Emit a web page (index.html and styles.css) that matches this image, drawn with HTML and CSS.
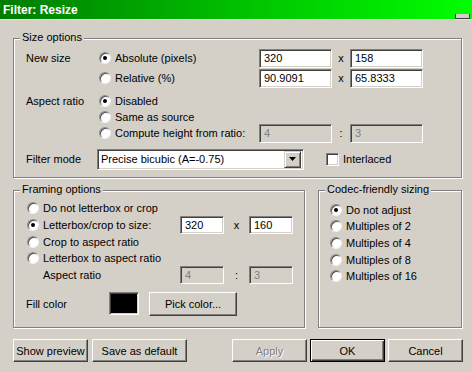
FILE: index.html
```html
<!DOCTYPE html>
<html>
<head>
<meta charset="utf-8">
<link rel="stylesheet" href="styles.css">
</head>
<body>
<div class="window">
  <div class="titlebar">
    <span class="title">Filter: Resize</span>
    <span class="tb-btn"></span>
  </div>
  <div class="content">
    <div class="group group-size">
      <span class="legend">Size options</span>
      <div class="row h20">
        <span class="lbl w73">New size</span>
        <span class="opt w160"><span class="radio on"></span>Absolute (pixels)</span>
        <span class="field w73">320</span><span class="sep w18">x</span><span class="field w73">158</span>
      </div>
      <div class="row h20">
        <span class="lbl w73"></span>
        <span class="opt w160"><span class="radio"></span>Relative (%)</span>
        <span class="field w73">90.9091</span><span class="sep w18">x</span><span class="field w73">65.8333</span>
      </div>
      <div class="row h16 mt5">
        <span class="lbl w73">Aspect ratio</span>
        <span class="opt w160"><span class="radio on"></span>Disabled</span>
      </div>
      <div class="row h16">
        <span class="lbl w73"></span>
        <span class="opt w160"><span class="radio"></span>Same as source</span>
      </div>
      <div class="row h16">
        <span class="lbl w73"></span>
        <span class="opt w160"><span class="radio"></span>Compute height from ratio:</span>
        <span class="field w73 disabled">4</span><span class="sep w18">:</span><span class="field w73 disabled">3</span>
      </div>
      <div class="row h22 mt7">
        <span class="lbl w71">Filter mode</span>
        <div class="combo">
          <span class="combo-text">Precise bicubic (A=-0.75)</span>
          <span class="combo-btn"><svg width="7" height="4" viewBox="0 0 7 4"><path d="M0 0h7L3.5 4z" fill="#000"/></svg></span>
        </div>
        <span class="check"></span>
        <span class="check-label">Interlaced</span>
      </div>
    </div>

    <div class="lower">
      <div class="group group-frame">
        <span class="legend">Framing options</span>
        <div class="row h16">
          <span class="opt"><span class="radio"></span>Do not letterbox or crop</span>
        </div>
        <div class="row h17">
          <span class="opt w153"><span class="radio on"></span>Letterbox/crop to size:</span>
          <span class="field w44 h18">320</span><span class="sep w25">x</span><span class="field w44 h18">160</span>
        </div>
        <div class="row h17">
          <span class="opt"><span class="radio"></span>Crop to aspect ratio</span>
        </div>
        <div class="row h16">
          <span class="opt"><span class="radio"></span>Letterbox to aspect ratio</span>
        </div>
        <div class="row h18">
          <span class="lbl w153 indent">Aspect ratio</span>
          <span class="field w44 h18 disabled">4</span><span class="sep w25">:</span><span class="field w44 h18 disabled">3</span>
        </div>
        <div class="row h23 mt8 fill-row">
          <span class="lbl w83">Fill color</span>
          <span class="swatch"></span>
          <span class="btn pick">Pick color...</span>
        </div>
      </div>

      <div class="group group-codec">
        <span class="legend">Codec-friendly sizing</span>
        <div class="row h16"><span class="opt"><span class="radio on"></span>Do not adjust</span></div>
        <div class="row h16"><span class="opt"><span class="radio"></span>Multiples of 2</span></div>
        <div class="row h17"><span class="opt"><span class="radio"></span>Multiples of 4</span></div>
        <div class="row h17"><span class="opt"><span class="radio"></span>Multiples of 8</span></div>
        <div class="row h16"><span class="opt"><span class="radio"></span>Multiples of 16</span></div>
      </div>
    </div>

    <div class="buttons">
      <span class="btn b75">Show preview</span>
      <span class="btn b95 ml4">Save as default</span>
      <span class="btn b75 apply">Apply</span>
      <span class="btn b75 ml3 default">OK</span>
      <span class="btn b75 ml3">Cancel</span>
    </div>
  </div>
</div>
</body>
</html>
```

FILE: styles.css
```css
* { box-sizing: border-box; }

html, body {
  margin: 0;
  padding: 0;
  background: #d4d0c8;
}

body {
  font-family: "Liberation Sans", Arial, sans-serif;
  font-size: 11px;
  color: #000;
}

.window {
  width: 472px;
  height: 372px;
  background: #d4d0c8;
  overflow: hidden;
}

.titlebar {
  position: relative;
  height: 20px;
  background: linear-gradient(to right, #007c00, #00c000 50%, #00ff00);
  display: flex;
  align-items: center;
  padding-left: 3px;
  border-bottom: 1px solid #e6e3dc;
}

.title {
  color: #fff;
  font-weight: bold;
  font-size: 12px;
  line-height: 14px;
}

.tb-btn {
  position: absolute;
  right: 2px;
  top: 14px;
  width: 15px;
  height: 5px;
  background: #d4d0c8;
  border: 1px solid #404040;
  border-top: none;
}

.content {
  padding: 18px 9px 0 13px;
  display: flex;
  flex-direction: column;
}

.group {
  position: relative;
  border: 1px solid #808080;
  box-shadow: inset 1px 1px 0 #fff, 1px 1px 0 #fff;
  display: flex;
  flex-direction: column;
}

.legend {
  position: absolute;
  top: -8px;
  left: 6px;
  height: 13px;
  line-height: 13px;
  padding: 0 2px;
  background: #d4d0c8;
}

.group-size {
  width: 449px;
  height: 140px;
  padding: 9px 0 0 12px;
}

.lower {
  display: flex;
  gap: 13px;
  margin-top: 12px;
}

.group-frame {
  width: 292px;
  height: 138px;
  padding: 9px 0 0 13px;
}

.group-codec {
  width: 144px;
  height: 138px;
  padding: 11px 0 0 11px;
}

.row {
  display: flex;
  align-items: center;
  white-space: nowrap;
}

.h16 { height: 16px; }
.h17 { height: 17px; }
.h18 { height: 18px; }
.h20 { height: 20px; }
.h22 { height: 22px; }
.h23 { height: 23px; }
.mt5 { margin-top: 5px; }
.mt7 { margin-top: 7px; }
.mt8 { margin-top: 8px; }

.lbl { flex: none; }
.w71 { width: 71px; }
.w73 { width: 73px; }
.w83 { width: 83px; }
.w153 { width: 153px; }
.w160 { width: 160px; }
.w44 { width: 44px; }
.w18 { width: 18px; }
.w25 { width: 25px; }
.indent { padding-left: 16px; }

.opt {
  display: flex;
  align-items: center;
  gap: 4px;
  flex: none;
}

.radio {
  position: relative;
  flex: none;
  width: 12px;
  height: 12px;
  border-radius: 50%;
  background: #fff;
  border: 1px solid;
  border-color: #8a8a8a #f0f0f0 #f0f0f0 #8a8a8a;
  box-shadow: inset 1px 1px 0 #505050;
}

.radio.on::after {
  content: "";
  position: absolute;
  left: 3px;
  top: 3px;
  width: 4px;
  height: 4px;
  border-radius: 50%;
  background: #000;
}

.field {
  flex: none;
  height: 19px;
  line-height: 17px;
  padding: 0 4px;
  background: #fff;
  border: 1px solid;
  border-color: #808080 #fff #fff #808080;
  box-shadow: inset 1px 1px 0 #404040, inset -1px -1px 0 #d4d0c8;
}

.field.h18 { height: 18px; line-height: 16px; }

.field.disabled {
  background: #d4d0c8;
  color: #808080;
}

.sep {
  flex: none;
  text-align: center;
}

.combo {
  flex: none;
  width: 207px;
  height: 21px;
  display: flex;
  align-items: center;
  justify-content: space-between;
  background: #fff;
  border: 1px solid;
  border-color: #808080 #fff #fff #808080;
  box-shadow: inset 1px 1px 0 #404040, inset -1px -1px 0 #d4d0c8;
  padding: 2px 2px 2px 3px;
}

.combo-text {
  line-height: 15px;
}

.combo-btn {
  width: 17px;
  height: 17px;
  display: flex;
  align-items: center;
  justify-content: center;
  background: #d4d0c8;
  border: 1px solid;
  border-color: #d4d0c8 #404040 #404040 #d4d0c8;
  box-shadow: inset 1px 1px 0 #fff, inset -1px -1px 0 #808080;
}

.check {
  flex: none;
  width: 13px;
  height: 13px;
  margin-left: 22px;
  background: #fff;
  border: 1px solid;
  border-color: #808080 #fff #fff #808080;
  box-shadow: inset 1px 1px 0 #404040, inset -1px -1px 0 #d4d0c8;
}

.check-label {
  margin-left: 4px;
}

.fill-row {
  margin-left: -1px;
}

.swatch {
  flex: none;
  width: 30px;
  height: 23px;
  background: #000;
  border: 1px solid;
  border-color: #808080 #fff #fff #808080;
  box-shadow: inset 1px 1px 0 #404040, inset -1px -1px 0 #d4d0c8;
}

.btn {
  flex: none;
  display: flex;
  align-items: center;
  justify-content: center;
  height: 23px;
  background: #d4d0c8;
  border: 1px solid;
  border-color: #fff #404040 #404040 #fff;
  box-shadow: inset -1px -1px 0 #808080;
  white-space: nowrap;
}

.pick {
  width: 88px;
  height: 24px;
  margin-left: 10px;
}

.buttons {
  display: flex;
  margin-top: 11px;
}

.b75 { width: 75px; }
.b95 { width: 95px; }
.ml4 { margin-left: 4px; }
.ml3 { margin-left: 3px; }

.apply {
  margin-left: 45px;
  color: #808080;
  text-shadow: 1px 1px 0 #fff;
}

.btn.default {
  border: 1px solid #000;
  box-shadow: inset 1px 1px 0 #fff, inset -1px -1px 0 #404040, inset -2px -2px 0 #808080;
}
```
